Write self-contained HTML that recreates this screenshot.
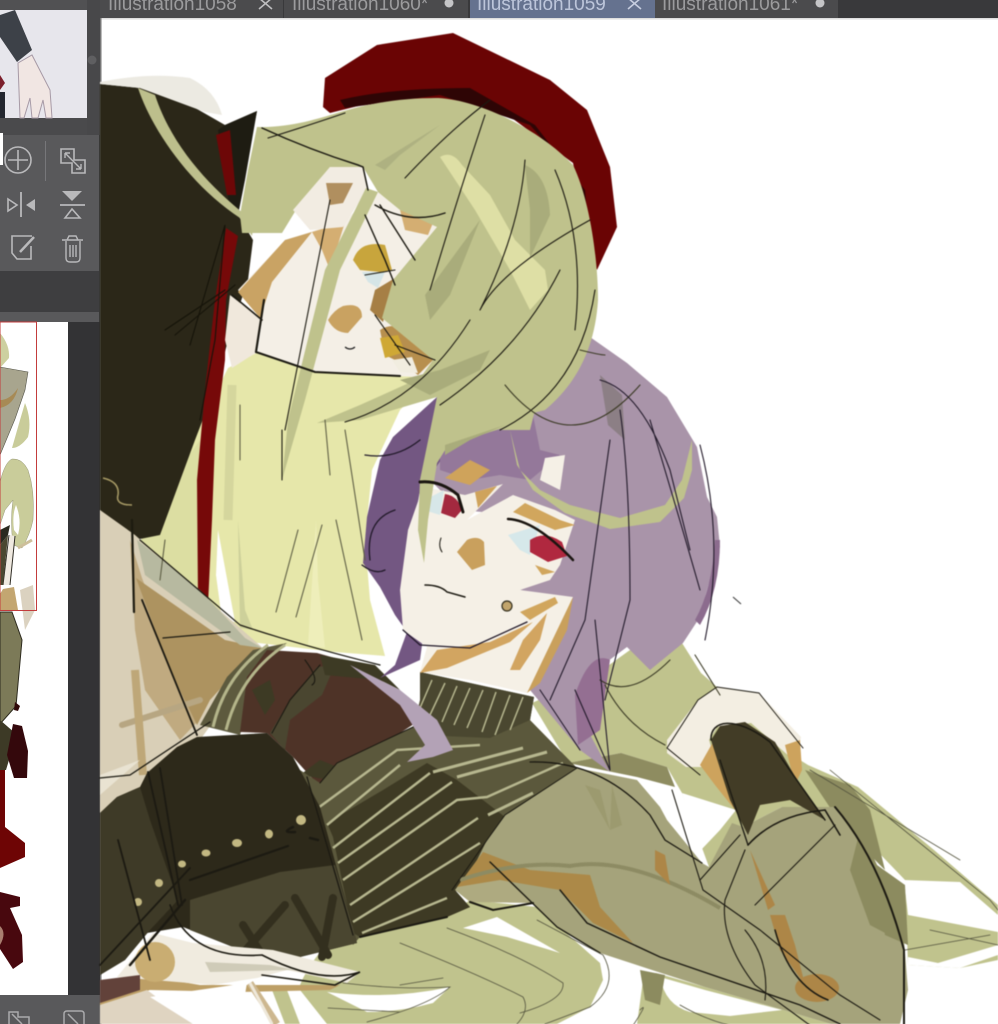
<!DOCTYPE html>
<html><head><meta charset="utf-8"><title>Illustration</title>
<style>html,body{margin:0;padding:0;background:#3d3d3f}svg{display:block}text{font-family:"Liberation Sans",sans-serif}</style></head>
<body>
<svg width="998" height="1024" viewBox="0 0 998 1024" xmlns="http://www.w3.org/2000/svg">
<rect width="998" height="1024" fill="#3d3d3f"/>
<rect x="0" y="0" width="100" height="135" fill="#515153"/>
<rect x="0" y="118" width="100" height="17" fill="#4a4a4c"/>
<rect x="87" y="0" width="13" height="135" fill="#48484a"/>
<circle cx="92" cy="60" r="4.500" fill="#5f5f61"/>
<!-- thumb -->
<rect x="0" y="10" width="87" height="108" fill="#e7e6ec"/>
<path d="M0 15L15 10L32 50L17 62L0 37Z" fill="#3d4148"/>
<path d="M18 63L32 55L50 90L52 118H46L43 100L38 118H32L30 98L24 118H20Z" fill="#f1e6e3" stroke="#a79aa6" stroke-width="1"/>
<path d="M0 75L5 83L0 90Z" fill="#7c1f2c"/><path d="M0 92H5V118H0Z" fill="#23262f"/>
<!-- tools -->
<rect x="0" y="135" width="99" height="136" fill="#59595b"/>
<rect x="0" y="133" width="3" height="32" fill="#fff"/>
<rect x="45" y="141" width="1" height="40" fill="#77777a"/>
<g fill="none" stroke="#b9b9bb" stroke-width="1.600">
<circle cx="18" cy="160" r="13"/><path d="M18 150V170M8 160H28"/>
<path d="M61 149H74V160H85V173H72V163H61Z"/><path d="M65 153L81 169M65 153h5M65 153v5M81 169h-5M81 169v-5" stroke-width="1.400"/>
<path d="M21 192V217" stroke-width="1.800"/><path d="M8 199L17 205L8 211Z"/>
<path d="M60 205H85" stroke-width="1.800"/><path d="M65 218L72 209L80 218Z"/>
<path d="M32 236H12V253L17 259H31V246"/><path d="M20 252L34 237" stroke-width="2.500"/>
<path d="M62 240H83M66 241V258Q66 262 70 262H76Q80 262 80 258V241M67 240L69 236H76L78 240M70 245V257M73 245V257M76 245V257" stroke-width="1.400"/>
</g>
<path d="M35 199L26 205L35 211Z" fill="#b9b9bb"/><path d="M62 191H82L72 201Z" fill="#b9b9bb"/>
<rect x="0" y="271" width="99" height="41" fill="#3e3e40"/>
<rect x="0" y="312" width="99" height="10" fill="#59595b"/>
<!-- navigator -->
<rect x="0" y="322" width="68" height="673" fill="#fff"/>
<rect x="68" y="322" width="32" height="673" fill="#333335"/>
<rect x="0" y="995" width="100" height="29" fill="#59595b"/>
<path d="M0 333Q10 345 9 358L0 368Z" fill="#cdd0a0"/>
<path d="M0 367L28 372L25 390L15 419L0 455Z" fill="#a8a58e" stroke="#55554a" stroke-width=".6"/>
<path d="M0 400Q10 400 18 388Q14 405 0 408Z" fill="#a78a55"/>
<path d="M25 403Q32 420 28 437Q20 448 12 448L20 420Z" fill="#c9cc9a"/>
<path d="M0 482Q5 462 12 459Q22 458 28 470Q35 490 33 520Q30 535 22 548L13 545Q10 520 13 500L5 510L0 525Z" fill="#c9cc9a" stroke="#87876a" stroke-width=".4"/>
<path d="M16 505Q22 520 18 535L14 530Q12 515 16 505Z" fill="#fff"/>
<path d="M18 548L32 540" stroke="#cdbf9a" stroke-width="3"/>
<path d="M10 535L15 536L10 585H3Z" fill="#efe9e0"/>
<path d="M9 535L3 585M15 536L10 585" stroke="#2f2d25" stroke-width="1"/>
<path d="M0 530L10 525L8 535L0 545Z" fill="#2a2a20"/>
<path d="M0 545L8 535L3 585H0Z" fill="#4a4730"/>
<path d="M3 589L14 587L18 610H0V594Z" fill="#c3a671"/>
<path d="M20 590L33 585L35 610L25 630Z" fill="#dbd2c0"/>
<rect x="0" y="322" width="36.500" height="288.500" fill="none" stroke="#c33c3c" stroke-width="1"/>
<path d="M0 612L12 612L22 640L16 706L0 724Z" fill="#7c7a58" stroke="#2d2b1e" stroke-width="1"/>
<path d="M0 720L15 733L12 750L6 770L0 770Z" fill="#3d3a26"/>
<path d="M13 724L22 726L28 751L27 778L14 778L7 755Z" fill="#34080c"/>
<path d="M15 702L20 706L18 711L14 710Z" fill="#300809"/>
<path d="M0 770H5V827L25 843V857L0 868Z" fill="#6e0505"/>
<path d="M0 892L20 897V906L10 908L22 935L23 962L13 969L0 949Z" fill="#48080e"/>
<path d="M0 926Q7 933 0 945Z" fill="#a97f70"/>
<g fill="none" stroke="#aaaaac" stroke-width="1.500"><path d="M9 1024V1012H18V1017H29V1024"/><path d="M12 1014L22 1024"/><path d="M64 1024V1014Q64 1011 67 1011H81Q84 1011 84 1014V1024"/><path d="M68 1014L78 1024"/></g>
<!-- canvas -->
<rect x="100" y="18" width="898" height="1006" fill="#fff"/>
<!-- tabs -->
<rect x="100" y="0" width="898" height="19" fill="#39393b"/>
<rect x="100" y="0" width="183" height="18" fill="#4b4b4d"/>
<rect x="284" y="0" width="184" height="18" fill="#4b4b4d"/>
<rect x="470" y="0" width="185" height="18" fill="#65728f"/>
<rect x="655" y="0" width="183" height="18" fill="#4b4b4d"/>
<g font-size="19">
<text x="108" y="10" fill="#9b9b9d">Illustration1058</text>
<text x="292" y="10" fill="#9b9b9d">Illustration1060*</text>
<text x="477" y="10" fill="#bcc5da">Illustration1059</text>
<text x="662" y="10" fill="#9b9b9d">Illustration1061*</text>
</g>
<path d="M259 -2L272 9M272 -2L259 9" stroke="#bdbdbf" stroke-width="1.600" fill="none"/>
<path d="M628 -2L641 9M641 -2L628 9" stroke="#c6cddf" stroke-width="1.600" fill="none"/>
<circle cx="449" cy="3" r="4.500" fill="#c5c5c7"/><circle cx="820" cy="3" r="4.500" fill="#c5c5c7"/>
<rect x="100" y="18" width="898" height="1.500" fill="#dedede"/>
<rect x="100" y="18" width="1.500" height="1006" fill="#777"/>

<g style="filter:blur(.6px)">
<!-- BACK GREEN HAIR / ARM -->
<g fill="#c0c38d">
<path d="M532 703L598 673L644 640L682 643L701 673L717 687L800 760L808 765L858 787L934 850L998 905V960L960 968L908 965L905 880L835 807L782 807L743 827L709 867L682 793L667 767L621 753L568 763Z"/>
<path d="M340 930L447 917L470 900L537 907L600 963L603 980L590 1007L557 1024H285L272 990L300 985Q310 960 340 930Z"/>
<path d="M644 973L656 973L705 987L831 1024H637Z"/>
</g>
<path d="M682 793L736 810L720 830L701 850Z" fill="#fff"/>
<path d="M904 880L960 882L998 915V932L908 915Z" fill="#fff"/>
<path d="M908 957L938 963L998 945V955L960 968L908 965Z" fill="#fff"/>
<path d="M463 928L497 917L560 953L507 937Z" fill="#fff"/>
<path d="M327 992Q390 1000 450 987L433 1003Q400 1012 367 1012Z" fill="#fff"/>
<path d="M285 985L300 990L327 1024H300Z" fill="#fff"/>
<path d="M660 977L705 990L782 1010L730 1016L690 1012Q665 1005 660 977Z" fill="#fff"/>
<path d="M568 763L621 753L667 767L675 787L637 777Z" fill="#8e8c60"/>
<path d="M805 770L850 785L870 810L885 870L845 830Z" fill="#8c8b5f"/>
<!-- PALE LONG HAIR -->
<path d="M228 368L258 352L315 372L400 376L432 378L400 410L372 470L365 540L370 600L385 656L335 652L250 642L220 628L190 590L140 542L160 510L200 425Z" fill="#e6e7aa"/>
<path d="M140 542L172 480L200 440L205 600Z" fill="#dcdea2"/>
<path d="M218 530L235 622L222 620L216 575Z" fill="#fff"/>
<path d="M238 520L245 610L253 630L240 628Z" fill="#cdd09a"/>
<path d="M316 520L308 645L325 648L318 580Z" fill="#eeeeba"/>
<path d="M232 385L228 520" stroke="#c9cc95" stroke-width="9" fill="none" opacity=".6"/>
<!-- BLACK SLEEVE -->
<path d="M100 84L140 88L190 105L225 125L257 111L245 170L238 215L253 240L248 280L228 340L218 380L195 440L160 535L135 540L100 510Z" fill="#2b2718"/>
<path d="M225 125L257 111L245 180L238 215L230 210L218 130Z" fill="#1e1c12"/>
<path d="M216 135L230 130L236 195L227 195Z" fill="#6d0707"/>
<path d="M226 228L238 236L226 300L225 360L215 440L212 520L208 605L198 600L197 480L205 390L215 300Z" fill="#760909"/>
<path d="M100 82Q150 72 190 78Q215 90 222 115L205 112L140 88L100 84Z" fill="#eceae2"/>
<path d="M138 88C152 130 190 185 240 218L252 236L254 222C220 195 175 155 155 95Z" fill="#bdbf8c"/>
<path d="M103 478Q120 482 118 495Q115 505 132 505" fill="none" stroke="#a89b66" stroke-width="1.500"/>
<!-- BEIGE ARM -->
<path d="M100 510L135 535L265 650L200 740L140 790L100 815Z" fill="#d9cfb7"/>
<path d="M130 540L142 578L197 722L180 740L145 690L135 630Z" fill="#c0aa80"/>
<path d="M136 578L225 640L262 648L242 665L210 700L197 725L170 670Z" fill="#ad9360"/>
<path d="M137 540L145 575L240 645L262 648L245 638L200 590Z" fill="#b7b9a0"/>
<path d="M122 725L200 700" stroke="#b7a682" stroke-width="6" fill="none" stroke-linecap="round"/>
<path d="M135 670L143 775" stroke="#bea778" stroke-width="8" fill="none"/>
<path d="M140 760L100 795V775Z" fill="#e9e3d2"/>
<!-- CHEST -->
<path d="M200 725L227 677L253 650L287 643L262 660L240 735Z" fill="#5d5a3e"/>
<path d="M240 732L247 677L267 650L317 653L367 667L400 697L420 720L400 733L340 763L320 787L293 757L267 733Z" fill="#4e3327"/>
<path d="M270 733L290 700L317 667L335 665L322 695L290 720L285 750Z" fill="#4a4630"/>
<path d="M320 655L375 665L400 690L380 680L325 675Z" fill="#3d3a24"/>
<path d="M252 690L265 715L275 700L270 680Z" fill="#3d3a24"/>
<path d="M300 775L330 780L345 770L320 760Z" fill="#3d3a24"/>
<path d="M213 727Q225 675 268 645M226 730Q240 675 285 645" stroke="#b4b58a" stroke-width="3" fill="none"/>
<!-- SWEATER -->
<path d="M300 770L320 783L337 763L413 727L420 700L420 672L534 697L530 720L577 768L510 820L490 870L450 895L470 907L447 917L360 937L353 945Z" fill="#5b583c"/>
<path d="M383 790L427 763L457 780L505 817L492 845L455 890L470 907L447 917L360 937L353 933L333 837L327 823Z" fill="#3e3a24"/>
<path d="M420 672L534 697L530 720L490 738L420 735Z" fill="#4a4730"/>
<g stroke="#b7b78f" fill="none">
<path d="M318 808L397 750L480 745M327 825L400 765M333 848L430 773M338 863L452 782M343 880L457 800L487 797L563 763M350 905L478 818M353 922L480 843M362 933L447 898" stroke-width="2.500"/>
<path d="M433 772L523 748M457 777L547 752M488 815L533 793" stroke-width="3"/>
<path d="M432 680L420 708M445 683L430 715M457 686L442 722M470 688L454 725M483 690L467 728M496 692L482 732M510 695L495 735M523 697L510 730" stroke-width="1.500"/>
</g>
<!-- BUST -->
<path d="M147 773L177 747L197 737L267 733L293 757L320 807L353 927L357 943L300 957L233 947L183 927L147 933L125 960L100 975V813L117 797L140 787Z" fill="#2d291a"/>
<path d="M100 813L117 797L140 787L150 820L178 900L150 930L125 960L100 975Z" fill="#3e3a27"/>
<path d="M190 900L280 872L335 865L353 927L357 943L300 957L233 947L190 930Z" fill="#4a4630"/>
<path d="M243 925L262 955M246 950L285 905M295 898L328 955M333 898L322 957" stroke="#332f1e" stroke-width="8" fill="none" stroke-linecap="round"/>
<g fill="#c3b882"><circle cx="301" cy="820" r="5"/><ellipse cx="269" cy="834" rx="4" ry="4.500"/><ellipse cx="237" cy="843" rx="5" ry="4"/><ellipse cx="206" cy="853" rx="4.500" ry="3.500"/><ellipse cx="182" cy="864" rx="4" ry="3.500"/><ellipse cx="159" cy="883" rx="4" ry="4"/><ellipse cx="138" cy="902" rx="4" ry="4"/></g>
<!-- LOWER LEFT HAND -->
<path d="M100 985L140 975L200 985L340 985L360 975L330 990L240 992L150 990L100 1005Z" fill="#bd9f66"/>
<path d="M117 977L153 933L193 943L273 950L360 972L347 983L287 970L257 978L213 985Z" fill="#f0ebdf"/>
<circle cx="155" cy="962" r="20" fill="#c9ad72"/>
<path d="M205 962L270 965L320 975L290 970L210 972Z" fill="#cfcbb8"/>
<path d="M100 980L140 975V990L100 1003Z" fill="#62423a"/>
<path d="M100 1005L147 990L193 1024H100Z" fill="#dfd4c1"/>
<path d="M150 997L247 983L240 1024H193Z" fill="#fff"/>
<path d="M250 983L277 1024" stroke="#cdb78f" stroke-width="7"/>
<path d="M250 983L272 1024" stroke="#eee8da" stroke-width="3"/>
<!-- RIGHT ARM SLEEVE -->
<path d="M577 768L637 780L660 807L667 820L702 863L709 867L732 823L743 827L782 807L835 807L881 873L904 940L908 990L900 1024H831L705 987L652 970L600 953L557 927L490 862L462 890L487 840L505 815Z" fill="#a5a37b"/>
<path d="M455 890L483 852L490 862L533 903L470 902Z" fill="#aeaa80"/>
<path d="M860 830L881 873L904 940L908 945L870 925L850 870Z" fill="#8c8b5f"/>
<path d="M870 860L905 885L908 945L885 935Z" fill="#8c8b5f"/>
<path d="M457 887L483 852L530 870L590 875L600 907L633 943L593 923L560 890L500 880Z" fill="#ac8948"/>
<path d="M460 880Q520 860 570 866Q630 855 720 908" stroke="#8d8b63" stroke-width="4" fill="none"/>
<path d="M655 850L665 855L670 885L655 870Z" fill="#ad8647"/>
<path d="M770 915L780 950L805 985L795 945L785 915Z" fill="#ad8647"/>
<ellipse cx="817" cy="988" rx="22" ry="14" fill="#ad8647"/>
<path d="M750 850L775 905L768 910Z" fill="#ad8647"/>
<path d="M640 970L665 975L660 1005L645 1000Z" fill="#8c8b5f"/>
<path d="M585 785L610 830L600 790ZM612 785L610 830L622 825Z" fill="#969468" opacity=".6"/>
<!-- RIGHT HAND AND CUFF -->
<path d="M667 740L698 700L717 687L759 693L801 737L797 763L782 750L751 723L717 727L709 740L717 767L686 767L667 753Z" fill="#f3eee2"/>
<path d="M700 765L717 735L735 810L715 785Z" fill="#cda35d"/>
<path d="M785 745L800 740L802 770L795 785Z" fill="#cda35d"/>
<path d="M711 740L720 726L745 722L775 742L800 785L825 820L790 800L760 805L748 835L730 800Z" fill="#423c26"/>
<!-- BERET -->
<path d="M323 107L325 78L377 45L453 33L550 80L587 110L610 167L617 227L597 270L590 247L573 163L505 113L438 98L370 103L330 113Z" fill="#6a0404"/>
<path d="M340 100Q390 88 470 88L535 125L585 190L590 247L578 180L530 125L440 95L345 108Z" fill="#2e0505"/>
<!-- PURPLE HAIR -->
<path d="M590 337L627 363L667 397L697 447L707 497L717 517L720 547L707 590L700 617L683 643L650 670L627 647L600 667L577 710L610 772L580 750L530 690L565 600L520 590L570 520L460 510L430 480L437 397L533 413L573 373Z" fill="#a994a9"/>
<path d="M437 397L393 437L380 460L367 517L363 563L380 587L395 615L407 632L395 665L380 678L420 660L428 600L408 560L420 490L448 450Z" fill="#735782"/>
<path d="M600 375L622 395L625 440L608 425Z" fill="#8c7f85"/>
<path d="M610 660Q590 650 575 695L578 745L600 730Z" fill="#946f92"/>
<path d="M720 540Q720 590 700 625L695 620Q712 590 715 540Z" fill="#8c6c8e"/>
<path d="M440 410L530 400L540 450L560 455L530 480L500 475L470 480L440 470Z" fill="#94789a"/>
<path d="M350 665L400 690L437 720L453 750L433 757L407 762L425 745L400 705Z" fill="#b3a2b6"/>
<!-- LOWER FACE -->
<path d="M423 487L465 495L503 484L467 520L513 495L555 510L575 520L560 565L550 580L520 590L573 597L543 663L527 693L470 680L420 672L427 647L403 630L400 590L408 530Z" fill="#f5f0e6"/>
<path d="M545 458L565 455L560 490L540 480Z" fill="#f5f0e6"/>
<path d="M445 478L470 460L490 470L470 485Z" fill="#cfa35b"/>
<path d="M475 492L497 486L478 508Z" fill="#cfa35b"/>
<path d="M420 673L437 650L490 642L533 622L510 642L447 668Z" fill="#d2a561"/>
<path d="M510 670L523 640L547 613L540 640L520 670Z" fill="#d2a561"/>
<path d="M527 693L573 597L567 630L540 683Z" fill="#c9a05c"/>
<path d="M520 612L555 597L558 603L530 620Z" fill="#d1a65d"/>
<path d="M513 512L555 530L575 525L560 520L525 503Z" fill="#d1a65d"/>
<!-- eyes lower -->
<path d="M425 500L444 490L440 515L424 510Z" fill="#d7e7e8"/>
<path d="M445 494Q458 496 462 510L455 518L441 513Z" fill="#a3293f"/>
<path d="M508 535L540 525L530 555L520 550Z" fill="#d6e8ea"/>
<path d="M530 540Q545 530 562 542L567 556L548 562L530 552Z" fill="#b0283f"/>
<path d="M535 565L555 572L542 575Z" fill="#d1a65d"/>
<path d="M467 540Q478 535 484 542L485 565L472 570L457 552Z" fill="#c9a05d"/>
<!-- UPPER FACE -->
<path d="M238 290L285 240L310 232L345 220L378 192L437 227L393 280L382 318L433 360L420 377L400 376L315 372L258 352L262 320Z" fill="#f4efe6"/>
<path d="M238 292L285 240L312 232L272 282L260 318Z" fill="#c9a364"/>
<path d="M312 232L345 222L330 270L322 250Z" fill="#d4ae72"/>
<path d="M230 295L262 320L257 352L232 368L225 340Z" fill="#f0e8dc"/>
<path d="M343 306Q362 302 362 317L348 333Q335 333 328 320Q334 310 343 306Z" fill="#c9a261"/>
<path d="M345 347Q350 351 355 347" stroke="#222" stroke-width="1.200" fill="none"/>
<path d="M353 260Q360 240 385 245L392 270L380 272L360 270Z" fill="#c8a53c"/>
<path d="M362 272L385 272L378 288L368 282Z" fill="#d5e5e7"/>
<path d="M375 290L395 278L383 322L370 310Z" fill="#a67f45"/>
<path d="M380 330Q395 320 418 335L435 358L418 375L405 365L385 355Z" fill="#b78f4e"/>
<path d="M380 338L398 335L405 352L385 358Z" fill="#cfa835"/>
<path d="M392 360L412 357L418 373L400 372Z" fill="#f1ede0"/>
<path d="M400 210L435 218L428 235L405 230Z" fill="#d4ae72"/>
<!-- UPPER HAIR MASS -->
<path d="M257 127C290 128 320 118 337 113C370 103 400 98 438 98C480 100 540 130 573 165C590 200 598 260 598 300C595 350 575 385 545 410L533 413L513 425L490 432L447 447L437 463L428 520L424 563L418 530L420 480L437 397L400 408L360 420L317 423L360 405L420 378L433 360L382 318L393 280L437 227L400 210L378 192L363 167L330 167L296 210L282 233L242 233L240 215L248 170Z" fill="#bfc28c"/>
<!-- hand -->
<path d="M330 167L363 167L367 190L343 227L310 230L293 210Z" fill="#f2ece2"/>
<path d="M326 183L353 183L343 203L330 205Z" fill="#b08f5f"/>
<!-- front strand over face -->
<path d="M366 188L378 192L340 270L305 400L282 480L288 420L325 270Z" fill="#bfc28c"/>
<!-- highlights -->
<path d="M440 157Q452 150 462 165L490 195L515 240L545 270L548 290L530 310L510 270L475 210Z" fill="#dedfa5"/>
<path d="M525 165Q548 175 550 215L530 258L530 210Z" fill="#a9ac7b"/>
<path d="M425 295L480 220L450 295L430 320Z" fill="#a9ac7b"/>
<path d="M400 380L440 370L490 350L480 370L430 395Z" fill="#a9ac7b"/>
<path d="M375 165L440 125L400 155L385 170Z" fill="#aeb181"/>
<path d="M445 445L505 425L470 440L445 455Z" fill="#a9ac7b"/>
<!-- curl strand -->
<path d="M510 430L520 470L540 490L570 505L620 518L665 505L682 480L692 440L692 470L684 498L660 522L610 529L565 513L533 490L517 465Z" fill="#bfc28c"/>
<path d="M500 430L520 420L535 410L530 430Z" fill="#bfc28c"/>
<!-- LINE ART -->
<g fill="none" stroke="#1c1a12" stroke-width="1.100" stroke-linecap="round">
<path d="M262 128Q310 150 358 165L363 167L368 190" stroke-width="1.500"/>
<path d="M268 138Q310 125 345 113M405 178Q450 130 490 100M485 115Q460 190 430 290M525 160Q520 230 480 310M555 170Q585 240 575 330M480 310Q500 270 590 220"/>
<path d="M375 205Q410 225 445 213M365 215L385 260L395 285M380 205L415 260" stroke-width="1.400"/>
<path d="M365 275L395 270M375 315L410 365M395 345L435 360"/>
<path d="M256 352L315 372L400 376" stroke-width="2"/>
<path d="M256 352L264 300" stroke-width="2.200"/>
<path d="M232 295L262 320" stroke-width="1.600"/>
<path d="M345 422Q420 400 470 320M440 405Q520 350 560 270M500 430Q580 390 595 290M330 200L285 430M282 430L282 480"/>
<path d="M505 385Q570 465 640 385M580 350Q600 355 605 355" stroke="#3b3a25"/>
<path d="M240 405L240 460M325 420L330 475M345 430L365 560M298 530L276 612M322 525L296 617M336 520L362 640M165 540L160 580" stroke="#5f5f45"/>
<path d="M165 330L225 290M175 335L235 285M190 345L225 225L215 340L200 420" stroke="#151309"/>
<path d="M132 520L134 612" stroke="#1d1b10" stroke-width="2.200"/>
<path d="M142 600L197 735" stroke-width="1.800"/>
<path d="M100 778L130 775L210 722M163 638L230 632" stroke-width="1.300"/>
<path d="M160 768L182 905M148 772L178 905" stroke-width="1.800"/>
<path d="M118 840L150 960M190 868L100 965" stroke-width="1.800"/>
<path d="M185 900L130 965" stroke-width="2.500"/>
<path d="M307 777L353 935" stroke-width="1.300"/>
<path d="M190 880L288 846" stroke-width="2.200"/>
<path d="M295 832Q280 833 293 827M310 838L318 840" stroke-width="2.500"/>
<path d="M170 905Q190 960 262 955Q320 985 360 972L335 985L262 975" stroke-width="1.600"/>
<path d="M140 540L240 625Q300 645 380 665" stroke-width="1.200"/>
<path d="M272 733L290 700L320 665M305 660Q320 680 312 685"/>
<path d="M320 783L337 763L413 727M452 890L487 840L505 815L577 768" stroke-width="1"/>
<path d="M360 937L447 917M470 902L493 910L533 903" stroke-width="2"/>
<path d="M490 862L557 927L600 953M560 890L587 923L660 957L800 1005L840 1024" stroke-width="1.400"/>
<path d="M530 762Q600 760 650 815L665 840L702 863" stroke-width="1.300"/>
<path d="M672 790L703 890L760 930L840 995L880 1020"/>
<path d="M835 807Q880 860 904 950V1024" stroke-width="2"/>
<path d="M745 850L725 900Q720 940 755 985L830 1040M745 930Q770 960 765 1000" stroke-width="1.100"/>
<path d="M775 930Q790 985 828 1000" stroke-width="1.500"/>
<path d="M711 740C710 720 735 715 770 742L825 820" stroke-width="1.500"/>
<path d="M720 760L748 845" stroke-width="1.300"/>
<path d="M748 845Q775 815 825 810L840 835" stroke-width="1.600"/>
<path d="M755 905L835 825M700 880L740 835"/>
<path d="M700 775L667 748L698 700L717 687L759 693L803 748" stroke-width="1"/>
<path d="M830 770L990 900L998 910M810 770L960 860M930 930L998 945M905 950L990 935" stroke="#53533e" stroke-width=".8"/>
<path d="M400 943Q480 975 523 997Q530 1010 517 1024M447 928Q520 955 563 983Q565 1000 520 1013M537 920L603 955Q620 985 590 1007L545 1024M343 983Q400 990 450 987Q430 1005 367 1022M328 1008L400 1012M400 985L443 978M640 1010Q650 1000 630 1030M680 1005Q740 1040 820 1030" stroke="#53533e" stroke-width=".8"/>
<path d="M605 685Q625 725 665 745M670 660Q630 700 600 680M695 655L720 695" stroke="#3b3a25"/>
<path d="M600 380Q640 390 670 470L690 550M620 410Q630 480 630 600L605 700M650 420Q680 520 700 590M610 440L585 620L550 700M700 445Q725 540 705 640M575 690L610 770M540 690L580 750M595 620L610 770" stroke="#221a2a"/>
<path d="M365 455Q395 460 420 440M395 510Q365 520 370 560M362 565Q375 575 385 570M403 630L420 645L470 648L527 622" stroke="#221a2a" stroke-width="1.300"/>
<path d="M420 482Q440 480 458 495L463 512" stroke="#1a1510" stroke-width="3"/>
<path d="M508 519Q535 520 573 560" stroke="#1a1510" stroke-width="2.500"/>
<path d="M425 585Q440 585 447 592L465 597" stroke-width="1.500"/>
<path d="M441 538Q438 546 442 552" stroke-width="1"/>
</g>
<circle cx="507" cy="606" r="5" fill="#c2a56c" stroke="#332f1e" stroke-width="1.200"/>
<path d="M733 597L741 604" stroke="#333" stroke-width="1"/>
</g>
</svg>
</body></html>
